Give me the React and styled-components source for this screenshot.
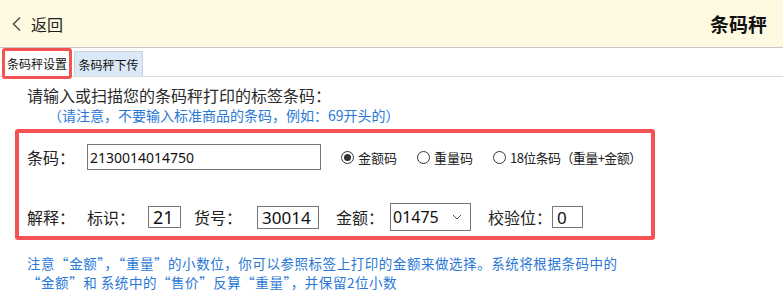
import React from "react";
import styled, { createGlobalStyle } from "styled-components";

const Global = createGlobalStyle`
  html, body { margin: 0; padding: 0; background: #fff; }
  body {
    font-family: "Noto Sans", "Noto Sans CJK SC", sans-serif;
    color: #222;
    width: 783px;
    height: 306px;
    overflow: hidden;
  }
  * { box-sizing: border-box; }
`;

const Header = styled.header`
  height: 48px;
  background: #fef9e1;
  border-bottom: 1px solid #c8c8c8;
  display: flex;
  align-items: center;
  justify-content: space-between;
  padding: 0 16px 0 11px;
`;

const Back = styled.div`
  display: flex;
  align-items: center;
  gap: 8px;
  font-family: "Noto Sans CJK SC", sans-serif;
  font-size: 16px;
  color: #222;
`;

const Title = styled.div`
  font-family: "Noto Sans CJK SC", sans-serif;
  font-size: 19px;
  font-weight: 700;
  color: #111;
`;

const TabBar = styled.div`
  height: 29px;
  border-bottom: 1px solid #dcdcdc;
  display: flex;
  align-items: flex-end;
  padding-left: 2px;
  gap: 2px;
`;

const Tab = styled.div`
  font-family: "Noto Sans CJK SC", sans-serif;
  font-size: 12px;
  display: flex;
  align-items: center;
  justify-content: center;
  color: #111;
  ${(p) =>
    p.$active
      ? `
    align-self: flex-start;
    width: 70px;
    height: 31px;
    border: 3px solid #f55353;
    border-radius: 3px;
    background: #fff;
    margin-bottom: -2px;
  `
      : `
    width: 69px;
    height: 25px;
    background: #dbe8f6;
    border: 1px solid #c9d3de;
    border-bottom: none;
  `}
`;

const Main = styled.main`
  padding: 8px 0 0 15px;
  font-family: "Noto Sans CJK SC", sans-serif;
`;

const Heading = styled.div`
  font-size: 16px;
  line-height: 20px;
  color: #2a2a2a;
  padding-left: 12px;
`;

const Hint = styled.div`
  margin-top: 1px;
  font-size: 14px;
  line-height: 18px;
  color: #2a78d6;
  padding-left: 33px;
`;

const Box = styled.section`
  margin-top: 5px;
  width: 640px;
  height: 111px;
  border: 4px solid #f55353;
  border-radius: 3px;
  padding: 11px 0 0 8px;
  display: flex;
  flex-direction: column;
`;

const Row = styled.div`
  display: flex;
  align-items: center;
  height: ${(p) => p.$h}px;
  margin-top: ${(p) => p.$mt || 0}px;
`;

const Label = styled.span`
  font-size: 16px;
  color: #222;
  width: ${(p) => p.$w}px;
  margin-left: ${(p) => p.$ml || 0}px;
  flex: none;
  white-space: nowrap;
`;

const Field = styled.div`
  flex: none;
  width: ${(p) => p.$w}px;
  height: ${(p) => p.$h}px;
  border: 1px solid #777;
  display: flex;
  align-items: center;
  padding-left: ${(p) => p.$pl}px;
  font-family: "Noto Sans", sans-serif;
  font-size: ${(p) => p.$fs}px;
  color: #111;
  background: #fff;
  white-space: nowrap;
  overflow: hidden;
`;

const Select = styled(Field)`
  justify-content: space-between;
  padding-right: 8px;
`;

const Radios = styled.div`
  display: flex;
  align-items: center;
  gap: 20px;
  margin-left: 20px;
`;

const RadioItem = styled.label`
  display: flex;
  align-items: center;
  gap: 4px;
  font-size: 13px;
  color: #222;
  letter-spacing: ${(p) => (p.$tight ? "-0.6px" : "0")};
`;

const Circle = styled.span`
  width: 13px;
  height: 13px;
  border-radius: 50%;
  border: 1px solid #333;
  display: flex;
  align-items: center;
  justify-content: center;
  &::after {
    content: "";
    width: 7px;
    height: 7px;
    border-radius: 50%;
    background: ${(p) => (p.$on ? "#333" : "transparent")};
  }
`;

const Note = styled.p`
  margin: 14px 0 0 12px;
  font-size: 13.5px;
  line-height: 19px;
  color: #2a78d6;
  letter-spacing: 0.55px;
`;

const Radio = ({ on, tight, children }) => (
  <RadioItem $tight={tight}>
    <Circle $on={on} />
    {children}
  </RadioItem>
);

export default function App() {
  return (
    <>
      <Global />
      <Header>
        <Back>
          <svg width="12" height="16" viewBox="0 0 12 16" fill="none">
            <path d="M9 1.5 L2.5 8 L9 14.5" stroke="#555" strokeWidth="1.6" />
          </svg>
          返回
        </Back>
        <Title>条码秤</Title>
      </Header>
      <TabBar>
        <Tab $active>条码秤设置</Tab>
        <Tab>条码秤下传</Tab>
      </TabBar>
      <Main>
        <Heading>请输入或扫描您的条码秤打印的标签条码：</Heading>
        <Hint>（请注意，不要输入标准商品的条码，例如：69开头的）</Hint>
        <Box>
          <Row $h={26}>
            <Label $w={60}>条码：</Label>
            <Field $w={234} $h={26} $pl={2} $fs={14}>2130014014750</Field>
            <Radios>
              <Radio on>金额码</Radio>
              <Radio>重量码</Radio>
              <Radio tight>18位条码（重量+金额）</Radio>
            </Radios>
          </Row>
          <Row $h={28} $mt={33}>
            <Label $w={60}>解释：</Label>
            <Label $w={61}>标识：</Label>
            <Field $w={33} $h={22} $pl={4} $fs={18}>21</Field>
            <Label $w={63} $ml={13}>货号：</Label>
            <Field $w={62} $h={23} $pl={4} $fs={17}>30014</Field>
            <Label $w={54} $ml={17}>金额：</Label>
            <Select $w={81} $h={28} $pl={2} $fs={16}>
              01475
              <svg width="10" height="6" viewBox="0 0 10 6" fill="none">
                <path d="M1 1 L5 5 L9 1" stroke="#555" strokeWidth="1" />
              </svg>
            </Select>
            <Label $w={64} $ml={17}>校验位：</Label>
            <Field $w={31} $h={22} $pl={4} $fs={17}>0</Field>
          </Row>
        </Box>
        <Note>
          注意“金额”，“重量”的小数位，你可以参照标签上打印的金额来做选择。系统将根据条码中的
          <br />
          “金额”和 系统中的“售价”反算“重量”，并保留2位小数
        </Note>
      </Main>
    </>
  );
}
